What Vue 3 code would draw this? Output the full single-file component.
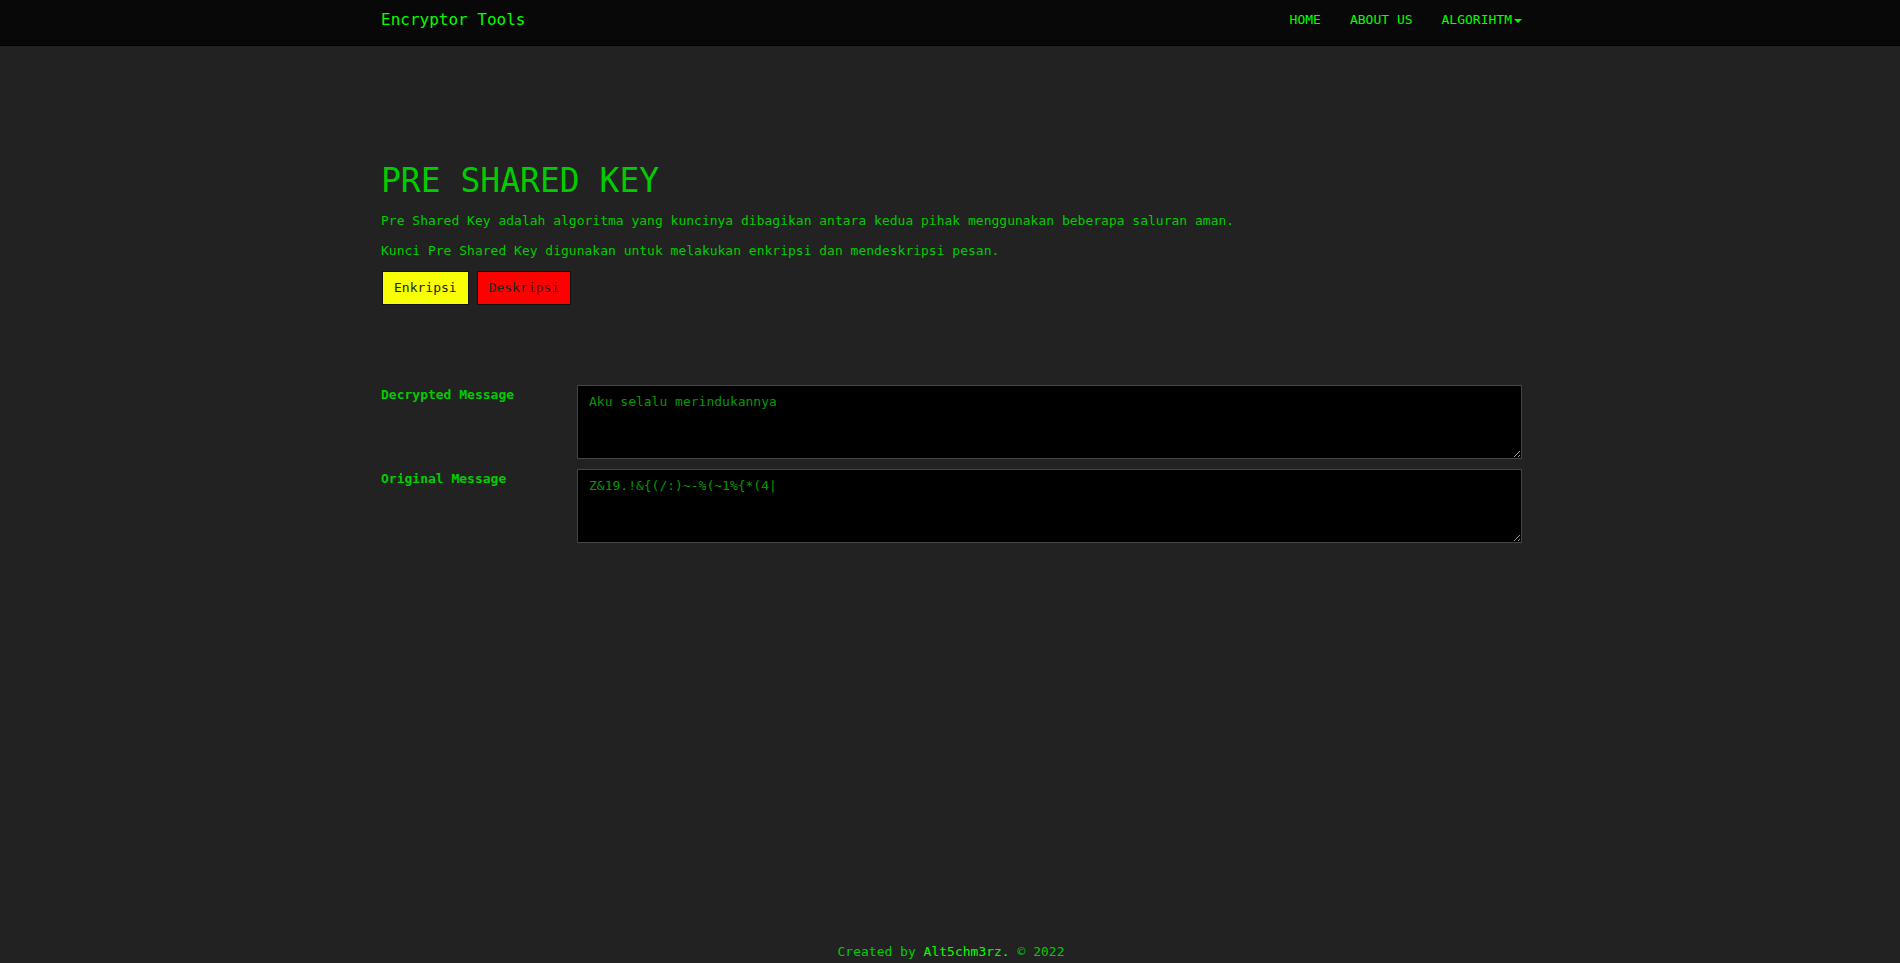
<script setup>
import { ref } from 'vue'

const decrypted = ref('Aku selalu merindukannya')
const original = ref('Z&19.!&{(/:)~-%(~1%{*(4|')
</script>

<template>
  <div class="page">
    <header class="navbar">
      <nav class="container bar">
        <a class="brand" href="#">Encryptor Tools</a>
        <ul class="links">
          <li><a href="#">HOME</a></li>
          <li><a href="#about">ABOUT US</a></li>
          <li><a href="#algorithm">ALGORIHTM<span class="caret"></span></a></li>
        </ul>
      </nav>
    </header>

    <main class="container content">
      <h1>PRE SHARED KEY</h1>
      <p>Pre Shared Key adalah algoritma yang kuncinya dibagikan antara kedua pihak menggunakan beberapa saluran aman.</p>
      <p>Kunci Pre Shared Key digunakan untuk melakukan enkripsi dan mendeskripsi pesan.</p>
      <div class="actions">
        <button class="encrypt" type="button">Enkripsi</button>
        <button class="decrypt" type="button">Deskripsi</button>
      </div>

      <form class="messages" @submit.prevent>
        <label for="decrypted">Decrypted Message</label>
        <textarea id="decrypted" v-model="decrypted" rows="3" spellcheck="false"></textarea>
        <label for="original">Original Message</label>
        <textarea id="original" v-model="original" rows="3" spellcheck="false"></textarea>
      </form>
    </main>

    <footer>Created by <a href="#author">Alt5chm3rz.</a> © 2022</footer>
  </div>
</template>

<style>
body {
  background: #222;
}
</style>

<style scoped>
.page {
  display: flex;
  flex-direction: column;
  min-height: 100vh;
  background: #222;
  color: #0c0;
  font: 13px/20px "DejaVu Sans Mono", "Liberation Mono", monospace;
}
.page * {
  box-sizing: border-box;
}
.container {
  width: 100%;
  max-width: 1170px;
  margin: 0 auto;
  padding: 0 13px 0 16px;
}
.navbar {
  background: #080808;
  border-bottom: 1px solid #000;
}
.bar {
  display: flex;
  justify-content: space-between;
  min-height: 45px;
  padding-top: 10px;
}
a {
  color: #0f0;
  text-decoration: none;
}
.brand {
  font-size: 16px;
}
.links {
  display: flex;
  gap: 29px;
  margin: 0;
  padding: 0;
  list-style: none;
}
.caret {
  display: inline-block;
  margin-left: 2px;
  vertical-align: middle;
  border-top: 4px solid;
  border-right: 4px solid transparent;
  border-left: 4px solid transparent;
}
.content {
  flex: 1;
  padding-top: 115px;
}
h1 {
  margin: 0 0 10px;
  font-size: 33px;
  font-weight: 400;
  line-height: 40px;
}
p {
  margin: 0 0 10px;
}
.actions {
  display: flex;
  gap: 8px;
  padding-left: 1px;
}
button {
  padding: 6px 11px;
  border: 1px solid #111;
  color: #222;
  font: inherit;
  cursor: pointer;
}
.encrypt {
  background: #f7ff00;
}
.decrypt {
  background: #f00;
}
.messages {
  display: grid;
  grid-template-columns: 196px 1fr;
  row-gap: 10px;
  margin-top: 80px;
}
label {
  font-weight: 700;
}
textarea {
  display: block;
  width: 100%;
  padding: 6px 11px;
  border: 1px solid #444;
  border-radius: 0;
  background: #000;
  color: #090;
  font: inherit;
  resize: vertical;
}
footer {
  padding: 0 0 1px 2px;
  text-align: center;
}
</style>
